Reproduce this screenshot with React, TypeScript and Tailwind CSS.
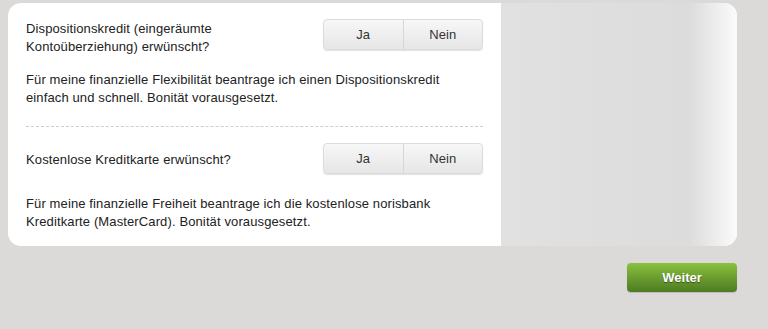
const font = { fontFamily: '"Liberation Sans", Arial, Helvetica, sans-serif' };

type ToggleProps = { className?: string };

const JaNein = ({ className = "" }: ToggleProps) => (
  <div
    className={`flex h-[31px] w-[160px] shrink-0 overflow-hidden rounded-[4px] border border-[#dcdcdc] bg-gradient-to-b from-[#f7f7f7] to-[#e6e6e6] shadow-[0_1px_1px_rgba(0,0,0,0.12)] ${className}`}
  >
    <button className="flex-1 text-[13px] text-[#333] border-r border-[#d6d6d6]">Ja</button>
    <button className="flex-1 text-[13px] text-[#333]">Nein</button>
  </div>
);

export default function App() {
  return (
    <div className="h-[329px] w-[768px] bg-[#dcdad8] pt-[3px] pl-[8px] pr-[31px]" style={font}>
      {/* card */}
      <div className="flex h-[243px] overflow-hidden rounded-[13px] bg-white">
        <div className="w-[493px] pl-[18px] pr-[18px] pt-[16px] text-[13px] leading-[18px] tracking-[0.12px] text-[#222]">
          {/* Dispo */}
          <div className="flex items-start justify-between">
            <p className="mt-[1px]">
              Dispositionskredit (eingeräumte
              <br />
              Kontoüberziehung) erwünscht?
            </p>
            <JaNein />
          </div>
          <p className="mt-[15px]">
            Für meine finanzielle Flexibilität beantrage ich einen Dispositionskredit
            <br />
            einfach und schnell. Bonität vorausgesetzt.
          </p>

          <div className="mt-[19px] border-t border-dashed border-[#cfcfcf]" />

          {/* Kreditkarte */}
          <div className="mt-[16px] flex items-center justify-between">
            <p className="mt-[2px]">Kostenlose Kreditkarte erwünscht?</p>
            <JaNein />
          </div>
          <p className="mt-[21px]">
            Für meine finanzielle Freiheit beantrage ich die kostenlose norisbank
            <br />
            Kreditkarte (MasterCard). Bonität vorausgesetzt.
          </p>
        </div>
        <div className="flex-1 bg-gradient-to-r from-[#e1e1e1] via-[#dcdcdc] via-[80%] to-[#fbfbfb]" />
      </div>

      <div className="mt-[17px] flex justify-end">
        <button className="h-[29px] w-[110px] rounded-[4px] bg-gradient-to-b from-[#89c23f] to-[#4e7b22] text-[13px] font-bold text-white shadow-[0_1px_1px_rgba(0,0,0,0.15)] [text-shadow:0_1px_1px_rgba(0,0,0,0.45)]">
          Weiter
        </button>
      </div>
    </div>
  );
}
